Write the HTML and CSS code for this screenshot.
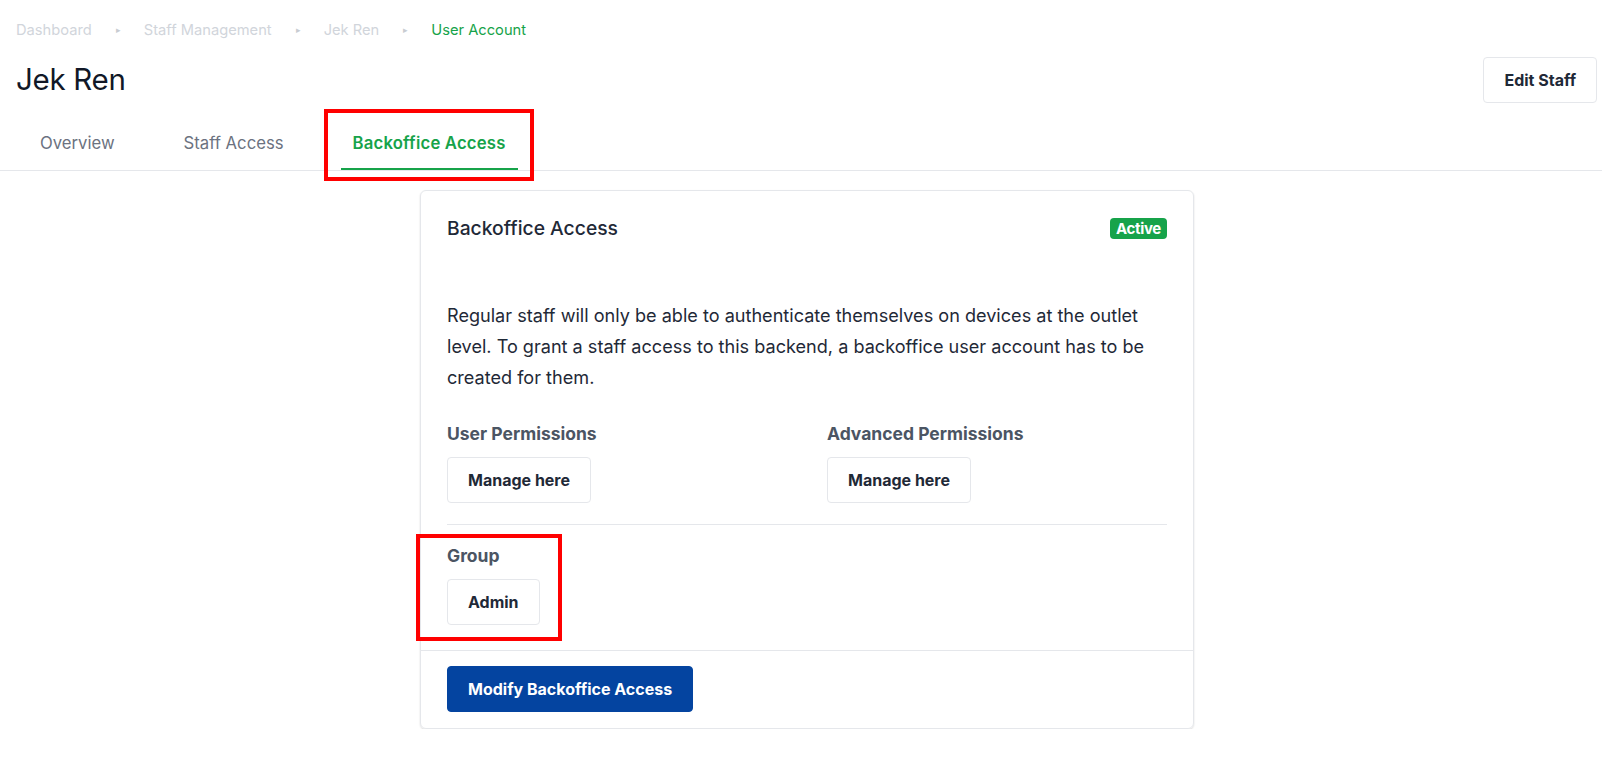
FILE: index.html
```
<!DOCTYPE html>
<html>
  <head>
    <meta charset="utf-8">
    <title>Jek Ren - User Account</title>
    <link rel="stylesheet" href="styles.css">
  </head>
  <body>

    <div class="page">

      <div class="crumbs">
        <span class="crumb">Dashboard</span><span class="sep">&#9656;</span>
        <span class="crumb">Staff Management</span><span class="sep">&#9656;</span>
        <span class="crumb">Jek Ren</span><span class="sep">&#9656;</span>
        <span class="crumb current">User Account</span>
      </div>

      <div class="titlebar">
        <h1>Jek Ren</h1>
        <button class="btn">Edit Staff</button>
      </div>

      <div class="tabs">
        <span class="tab">Overview</span>
        <span class="tab">Staff Access</span>
        <span class="tab active">Backoffice Access</span>
      </div>

      <div class="main">
        <div class="card">
          <div class="cardbody">
            <div class="cardhead">
              <h2>Backoffice Access</h2>
              <span class="badge">Active</span>
            </div>

            <p class="intro">Regular staff will only be able to authenticate themselves on devices at the outlet level. To grant a staff access to this backend, a backoffice user account has to be created for them.</p>

            <div class="perms">
              <div class="field">
                <div class="label">User Permissions</div>
                <button class="btn">Manage here</button>
              </div>
              <div class="field">
                <div class="label">Advanced Permissions</div>
                <button class="btn">Manage here</button>
              </div>
            </div>

            <div class="field group">
              <div class="label">Group</div>
              <button class="btn">Admin</button>
            </div>
          </div>
          <div class="cardfoot">
            <button class="btn primary">Modify Backoffice Access</button>
          </div>
        </div>
      </div>

    </div>

    <!-- annotation boxes -->
    <div class="mark mark-tab"></div>
    <div class="mark mark-group"></div>

  </body>
</html>
```

FILE: styles.css
```
body          { margin: 0; background-color: #fff; font-family: Inter, "Noto Sans", sans-serif; color: #1f2937; }

.page         { padding-top: 20px; }

.crumbs       { display: flex; align-items: center; padding-left: 16px; font-size: 14.7px; line-height: 20px; color: #d1d5db; }
.sep          { font-size: 9px; margin: 0 23px 0 24px; color: #c8ccd2; }
.crumb.current { color: #16a34a; }

.titlebar     { display: flex; justify-content: space-between; align-items: flex-start; padding: 10px 5px 0 16px; }
.titlebar h1  { margin: 0; font-size: 29.5px; line-height: 36px; font-weight: 400; color: #111827; letter-spacing: -0.3px; padding-top: 11px; }
.titlebar .btn { margin-top: 7px; }

.btn          { font-family: inherit; font-size: 16px; font-weight: 700; color: #1f2937; background: #fff; border: 1px solid #e5e7eb; border-radius: 4px; height: 46px; padding: 0 20px; cursor: pointer; }
.btn.primary  { background-color: #0444a0; border-color: #0444a0; color: #fff; }

.tabs         { display: flex; gap: 45px; padding-left: 28px; border-bottom: 1px solid #e5e7eb; margin-top: 15px; }
.tab          { padding: 13px 12px 13px 12px; font-size: 16.7px; line-height: 24px; color: #6b7280; border-bottom: 2px solid transparent; }
.tab.active   { color: #16a34a; font-weight: 600; letter-spacing: 0.2px; border-bottom-color: #16a34a; }

.main         { padding: 19px 0 0 12px; }
.card         { width: 772px; margin: 0 auto; border: 1px solid #e5e7eb; border-radius: 6px; box-shadow: 0 1px 2px rgba(0,0,0,0.14); }
.cardbody     { padding: 23px 26px 25px 26px; }
.cardhead     { display: flex; justify-content: space-between; align-items: flex-start; }
.cardhead h2  { margin: 0; font-size: 19.3px; line-height: 28px; font-weight: 500; color: #1f2937; }
.badge        { margin-top: 4px; background-color: #16a34a; color: #fff; font-size: 15px; font-weight: 700; line-height: 21px; padding: 0 6px; border-radius: 4px; letter-spacing: -0.3px; }

.intro        { margin: 58px 0 0 0; font-size: 18.1px; line-height: 31px; color: #1f2937; }

.perms        { display: grid; grid-template-columns: 380px 1fr; margin-top: 29px; padding-bottom: 21px; border-bottom: 1px solid #e5e7eb; }
.label        { font-size: 17.5px; line-height: 24px; font-weight: 700; color: #4b5563; margin-bottom: 11px; }
.group        { margin-top: 19px; }

.cardfoot     { border-top: 1px solid #e5e7eb; padding: 15px 26px 16px 26px; }

.mark         { position: absolute; border: 4px solid #ff0000; box-sizing: border-box; }
.mark-tab     { left: 324px; top: 109px; width: 210px; height: 72px; }
.mark-group   { left: 416px; top: 534px; width: 146px; height: 107px; }
```
